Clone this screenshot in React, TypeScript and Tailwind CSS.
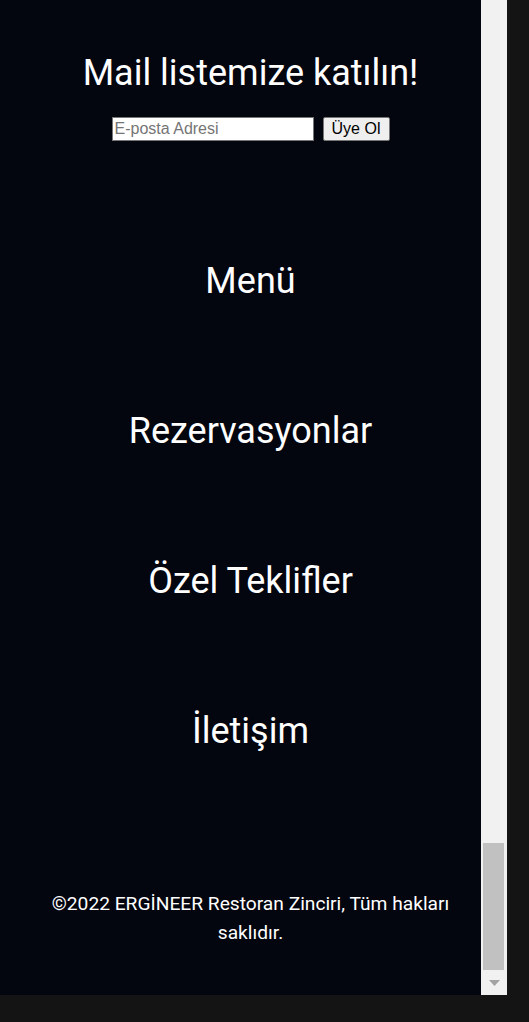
import React from "react";

export default function App() {
  const navItems = ["Menü", "Rezervasyonlar", "Özel Teklifler", "İletişim"];
  return (
    <div className="w-[529px] h-[1022px] bg-[#141414] overflow-hidden">
      <div className="flex w-[507px] h-[995px]">
        <div
          className="w-[481px] h-full bg-[#03050f] text-white pl-5 flex flex-col items-center"
          style={{ fontFamily: "Roboto, 'Noto Sans', sans-serif" }}
        >
          <h1 className="mt-[52px] text-[36px] leading-[42px] font-normal">Mail listemize katılın!</h1>
          <div className="mt-[23px] flex items-center gap-[9px]" style={{ fontFamily: "'Liberation Sans', Arial, sans-serif" }}>
            <input
              type="text"
              placeholder="E-posta Adresi"
              className="w-[202px] h-[24px] bg-white border border-[#767676] px-[2px] text-[16px] text-black placeholder:text-[#757575] outline-none"
            />
            <button className="w-[67px] h-[24px] px-0 bg-[#efefef] border border-[#767676] rounded-[2px] text-[16px] text-black leading-none">
              Üye Ol
            </button>
          </div>
          <nav className="mt-[119px] flex flex-col items-center gap-[108px]">
            {navItems.map((n) => (
              <a key={n} className="text-[36px] leading-[42px] text-white">
                {n}
              </a>
            ))}
          </nav>
          <p className="mt-[137px] text-[19.2px] leading-[29px] text-center px-[4px]">
            ©2022 ERGİNEER Restoran Zinciri, Tüm hakları
            <br />
            saklıdır.
          </p>
        </div>
        <div className="w-[26px] h-full bg-[#f1f1f1] flex flex-col justify-end">
          <div className="h-[127px] mx-[2px] w-[21px] bg-[#c1c1c1]" />
          <div className="h-[25px] flex items-center justify-center">
            <svg width="11" height="6" viewBox="0 0 11 6">
              <polygon points="0,0 11,0 5.5,6" fill="#a3a3a3" />
            </svg>
          </div>
        </div>
      </div>
    </div>
  );
}
